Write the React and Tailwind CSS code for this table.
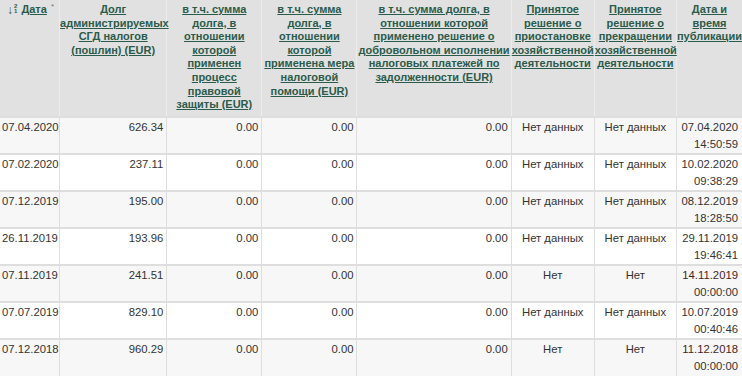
const headers = [
  { w: "w-[60px]", lines: null },
  { w: "w-[107px]", lines: ["Долг", "администрируемых", "СГД налогов", "(пошлин) (EUR)"] },
  {
    w: "w-[95px]",
    lines: ["в т.ч. сумма", "долга, в", "отношении", "которой", "применен", "процесс", "правовой", "защиты (EUR)"],
  },
  {
    w: "w-[95px]",
    lines: ["в т.ч. сумма", "долга, в", "отношении", "которой", "применена мера", "налоговой", "помощи (EUR)"],
  },
  {
    w: "w-[154px]",
    lines: [
      "в т.ч. сумма долга, в",
      "отношении которой",
      "применено решение о",
      "добровольном исполнении",
      "налоговых платежей по",
      "задолженности (EUR)",
    ],
  },
  { w: "w-[83px]", lines: ["Принятое", "решение о", "приостановке", "хозяйственной", "деятельности"] },
  { w: "w-[82px]", lines: ["Принятое", "решение о", "прекращении", "хозяйственной", "деятельности"] },
  { w: "w-[66px]", lines: ["Дата и", "время", "публикации"] },
];

const rows = [
  ["07.04.2020", "626.34", "Нет данных", "Нет данных", "07.04.2020", "14:50:59"],
  ["07.02.2020", "237.11", "Нет данных", "Нет данных", "10.02.2020", "09:38:29"],
  ["07.12.2019", "195.00", "Нет данных", "Нет данных", "08.12.2019", "18:28:50"],
  ["26.11.2019", "193.96", "Нет данных", "Нет данных", "29.11.2019", "19:46:41"],
  ["07.11.2019", "241.51", "Нет", "Нет", "14.11.2019", "00:00:00", true],
  ["07.07.2019", "829.10", "Нет данных", "Нет данных", "10.07.2019", "00:40:46"],
  ["07.12.2018", "960.29", "Нет", "Нет", "11.12.2018", "00:00:00", true],
];

const td = "border-x border-t-2 border-[#dedede] align-top pt-[1px] leading-[17px]";

export default function App() {
  return (
    <div className="h-[377px] w-[742px] overflow-hidden bg-white font-['Liberation_Sans',Arial,sans-serif] text-[11.3px] text-[#333]">
      <table className="ml-[-1px] w-[744px] table-fixed border-collapse">
        <thead>
          <tr className="h-[117px] bg-[#e1e1e1]">
            {headers.map((h, i) => (
              <th
                key={i}
                className={`${h.w} border-x border-[#ececec] px-0 pt-[3px] align-top text-center text-[11px] font-bold leading-[13.6px] text-[#2b5b4b]`}
              >
                {h.lines ? (
                  h.lines.map((l, j) => (
                    <div key={j} className="whitespace-nowrap underline underline-offset-1">
                      {l}
                    </div>
                  ))
                ) : (
                  <div className="flex items-start justify-center gap-[4px] whitespace-nowrap pl-[2px]">
                    <span className="relative mt-[1px] flex items-start text-[#2b5b4b]">
                      <span className="text-[12px] leading-[12px]">↓</span>
                      <span className="ml-[1px] flex flex-col text-[6px] leading-[5px]">
                        <span>2</span>
                        <span>1</span>
                      </span>
                    </span>
                    <span className="underline underline-offset-1">Дата</span>
                    <span className="mt-[-3px] text-[8px] font-normal text-[#777]">*</span>
                  </div>
                )}
              </th>
            ))}
          </tr>
        </thead>
        <tbody>
          {rows.map((r, i) => (
            <tr key={i} className={`h-[37px] ${i % 2 === 0 ? "bg-[#f7f7f7]" : "bg-white"}`}>
              <td className={`${td} pl-[2px] text-left`}>{r[0]}</td>
              <td className={`${td} pr-[3px] text-right`}>{r[1]}</td>
              <td className={`${td} pr-[3px] text-right`}>0.00</td>
              <td className={`${td} pr-[3px] text-right`}>0.00</td>
              <td className={`${td} pr-[3px] text-right`}>0.00</td>
              <td className={`${td} text-center`}>{r[2]}</td>
              <td className={`${td} text-center`}>{r[3]}</td>
              <td className={`${td} pr-[4px] text-right`}>
                <div className={r[6] ? "text-[#4a1f1f]" : ""}>{r[4]}</div>
                <div>{r[5]}</div>
              </td>
            </tr>
          ))}
        </tbody>
      </table>
    </div>
  );
}
